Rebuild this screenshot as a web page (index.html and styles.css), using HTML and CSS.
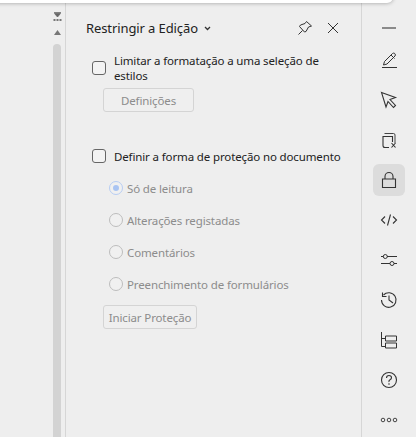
FILE: index.html
```html
<!DOCTYPE html>
<html lang="pt">
<head>
<meta charset="utf-8">
<title>Restringir a Edição</title>
<link rel="stylesheet" href="styles.css">
</head>
<body>
<div class="top-sheet"></div>
<div class="app">
  <aside class="gutter">
    <div class="scroll">
      <svg class="split" width="9" height="10" viewBox="0 0 9 10"><path d="M1 0.5h7M1.500 1.500h6L4.500 5z" fill="#666" stroke="#666" stroke-width="0.8"/><path d="M0.500 7h2v2h-2zM3.500 7h2v2h-2zM6.500 7h2v2h-2z" fill="#777"/></svg>
      <svg class="up" width="7" height="5" viewBox="0 0 7 5"><path d="M3.500 0L7 5H0z" fill="#777"/></svg>
      <div class="thumb"></div>
    </div>
  </aside>
  <main class="panel">
    <header class="head">
      <span class="title">Restringir a Edição</span>
      <svg class="caret" width="7" height="5" viewBox="0 0 7 5"><path d="M1 1l2.500 2.500L6 1" fill="none" stroke="#333" stroke-width="1.300"/></svg>
      <span class="spacer"></span>
      <svg class="pin" width="16" height="16" viewBox="0 0 16 16"><path d="M9.500 1.500l5 4.500-3 1-2.500 4.500-1.500.5-5-5.500 1-1.500 4.500-1.500zM5.500 10.500L1.500 14.500" fill="none" stroke="#333" stroke-width="1"/></svg>
      <svg class="close" width="12" height="12" viewBox="0 0 12 12"><path d="M1 1l10 10M11 1L1 11" fill="none" stroke="#333" stroke-width="1"/></svg>
    </header>
    <section class="group">
      <div class="check-row">
        <span class="check"></span>
        <span class="label">Limitar a formatação a uma seleção de estilos</span>
      </div>
      <button class="btn btn-settings" disabled>Definições</button>
    </section>
    <section class="group group-protect">
      <div class="check-row">
        <span class="check"></span>
        <span class="label">Definir a forma de proteção no documento</span>
      </div>
      <ul class="radios">
        <li class="radio-row"><span class="radio on"></span>Só de leitura</li>
        <li class="radio-row"><span class="radio"></span>Alterações registadas</li>
        <li class="radio-row"><span class="radio"></span>Comentários</li>
        <li class="radio-row"><span class="radio"></span>Preenchimento de formulários</li>
      </ul>
      <button class="btn btn-start" disabled>Iniciar Proteção</button>
    </section>
  </main>
  <nav class="rail">
    <span class="tool tool-first"><svg width="20" height="20" viewBox="0 0 20 20"><path d="M3 10h14" stroke="#8a8a8a" stroke-width="2" fill="none"/></svg></span>
    <span class="tool"><svg width="20" height="20" viewBox="0 0 20 20"><path d="M4.500 15l1-3.500 8-8q1-.8 2.200 0l.3.300q.8 1.200 0 2.200l-8 8zM12 5l3.500 3.500M3 17.500h15" fill="none" stroke="#333" stroke-width="1"/></svg></span>
    <span class="tool"><svg width="20" height="20" viewBox="0 0 20 20"><path d="M2.500 2.500l14 5-5.500 2 5.500 6-2 2-5.500-6-2 5.500z" fill="none" stroke="#333" stroke-width="1.100"/></svg></span>
    <span class="tool"><svg width="20" height="20" viewBox="0 0 20 20"><path d="M5.500 3.500h9q1.500 0 1.500 1.500v8" fill="none" stroke="#444" stroke-width="1"/><path d="M10 17.500H6Q4 17.500 4 15.500V6.500h9.500V12" fill="none" stroke="#333" stroke-width="1.100"/><path d="M12.500 13l4 4.500M16.500 13l-4 4.500" fill="none" stroke="#333" stroke-width="1.100"/></svg></span>
    <span class="tool tool-active"><svg width="20" height="20" viewBox="0 0 20 20"><path d="M3.500 9h13v8.500h-13zM6 9V6.500a4 4 0 0 1 8 0V9" fill="none" stroke="#333" stroke-width="1.100"/></svg></span>
    <span class="tool"><svg width="20" height="20" viewBox="0 0 20 20"><path d="M6 6.500L2.500 10 6 13.500M14 6.500l3.500 3.500-3.500 3.500M11.500 4.500L8.500 15.500" fill="none" stroke="#333" stroke-width="1.100"/></svg></span>
    <span class="tool"><svg width="20" height="20" viewBox="0 0 20 20"><path d="M2 6.500h2.500M8 6.500h10M2 13.500h9M15 13.500h3" fill="none" stroke="#333" stroke-width="1"/><circle cx="6.300" cy="6.500" r="2" fill="none" stroke="#333"/><circle cx="13" cy="13.500" r="2" fill="none" stroke="#333"/></svg></span>
    <span class="tool"><svg width="20" height="20" viewBox="0 0 20 20"><path d="M4.500 5A7.300 7.300 0 1 1 2.500 10" fill="none" stroke="#333" stroke-width="1.100"/><path d="M3.500 2.500V6.500h4M10 5.500V10l4 3" fill="none" stroke="#333" stroke-width="1.100"/></svg></span>
    <span class="tool"><svg width="20" height="20" viewBox="0 0 20 20"><path d="M2.500 2v14.500M2.500 8.500h3.500M2.500 16.500h3.500" fill="none" stroke="#333" stroke-width="1"/><path d="M6.500 6h11v5h-11zM6.500 13h11v5h-11z" fill="none" stroke="#333" stroke-width="1"/></svg></span>
    <span class="tool"><svg width="20" height="20" viewBox="0 0 20 20"><circle cx="10" cy="10" r="7.500" fill="none" stroke="#333" stroke-width="1.100"/><path d="M7.500 8q0-2.500 2.500-2.500t2.500 2.300q0 1.200-1.500 2T10 12" fill="none" stroke="#333" stroke-width="1.100"/><circle cx="10" cy="14" r=".8" fill="#333"/></svg></span>
    <span class="tool"><svg width="20" height="20" viewBox="0 0 20 20"><circle cx="4" cy="10" r="1.800" fill="none" stroke="#444"/><circle cx="10" cy="10" r="1.800" fill="none" stroke="#444"/><circle cx="16" cy="10" r="1.800" fill="none" stroke="#444"/></svg></span>
  </nav>
</div>
</body>
</html>
```
FILE: styles.css
```css
html, body { margin: 0; padding: 0; height: 100%; overflow: hidden; }
body { background: #eeeeee; font-family: "Noto Sans", sans-serif; font-size: 11.5px; letter-spacing: -0.13px; color: #222; position: relative; }
.top-sheet { position: absolute; top: -12px; left: -10px; width: 403px; height: 15px; background: #fff; border-radius: 0 0 6px 0; box-shadow: 0 0 4px rgba(0,0,0,.35); z-index: 2; }
.app { display: flex; height: 437px; width: 416px; }
.gutter { width: 65px; flex: none; border-right: 1px solid #d6d6d6; }
.scroll { width: 8px; margin-left: 53px; padding-top: 12px; display: flex; flex-direction: column; align-items: center; height: 425px; }
.split { display: block; }
.up { display: block; margin-top: 8px; }
.thumb { width: 8px; flex: 1; margin-top: 9px; background: #d3d3d3; border-radius: 4px 4px 0 0; }
.panel { width: 295px; flex: none; box-sizing: border-box; padding: 0 0 0 20px; }
.head { display: flex; align-items: center; height: 20px; margin-top: 18px; padding-right: 22px; }
.title { font-size: 13px; letter-spacing: -0.1px; color: #222; line-height: 20px; }
.caret { margin-left: 6px; margin-top: 1px; }
.spacer { flex: 1; }
.pin { margin-right: 14px; }
.group { padding-left: 6px; margin-top: 15px; }
.group-protect { margin-top: 37px; }
.check-row { display: flex; align-items: flex-start; }
.check { width: 12px; height: 12px; flex: none; border: 1px solid #666; border-radius: 3px; margin-top: 8px; background: #f3f3f3; }
.label { margin-left: 8px; line-height: 15px; width: 215px; color: #222; }
.group-protect .label { width: auto; white-space: nowrap; }
.group-protect .check { margin-top: 0; }
.btn { display: block; font: inherit; letter-spacing: inherit; color: #8c8c8c; background: #efefef; border: 1px solid #d4d4d4; border-radius: 3px; height: 24px; padding: 0; margin-left: 11px; }
.btn-settings { width: 91px; margin-top: 5px; }
.btn-start { width: 94px; margin-top: 11px; }
.radios { list-style: none; margin: 14px 0 0 17px; padding: 0; display: flex; flex-direction: column; gap: 12px; }
.radio-row { display: flex; align-items: center; height: 20px; color: #8c8c8c; }
.radio { width: 12px; height: 12px; border: 1px solid #bdbdbd; border-radius: 50%; margin-right: 4px; flex: none; background: #f0f0f0; position: relative; }
.radio.on { border-color: #b7cdf3; }
.radio.on::after { content: ""; position: absolute; left: 3px; top: 3px; width: 6px; height: 6px; border-radius: 50%; background: #a9c4f2; }
.rail { width: 55px; flex: none; border-left: 1px solid #d6d6d6; box-sizing: border-box; display: flex; flex-direction: column; align-items: center; padding-top: 12px; gap: 8px; }
.tool { width: 32px; height: 32px; flex: none; display: flex; align-items: center; justify-content: center; border-radius: 6px; }
.tool-first { margin-bottom: -8px; }
.tool-active { background: #dcdcdc; }
```
